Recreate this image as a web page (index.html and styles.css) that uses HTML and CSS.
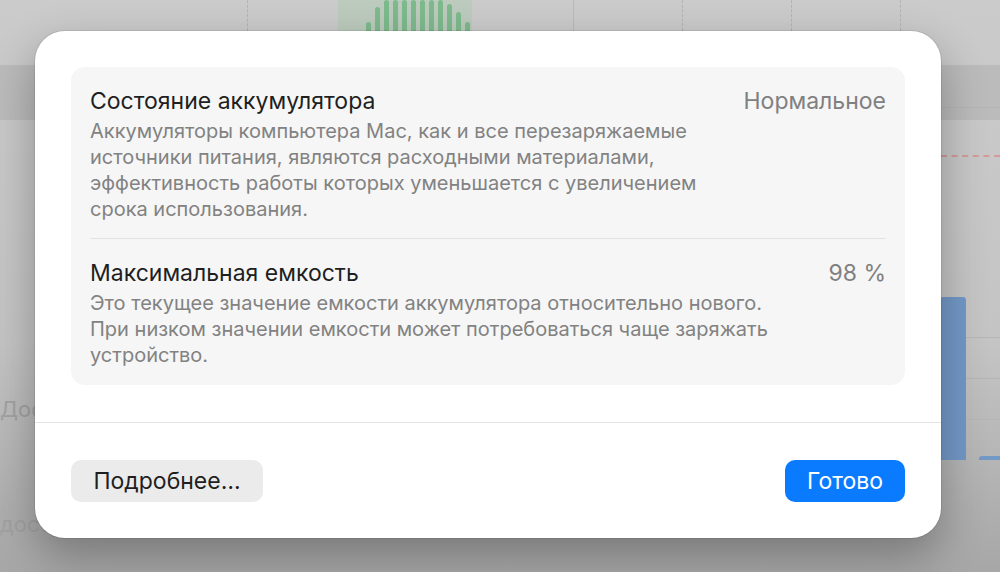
FILE: index.html
```html
<!DOCTYPE html>
<html lang="ru">
<head>
  <meta charset="UTF-8" />
  <meta name="viewport" content="width=device-width, initial-scale=1.0"/>
  <title>Состояние аккумулятора</title>
  <link rel="stylesheet" href="styles.css">
</head>
<body>
  <!-- окно "Аккумулятор" за листом, притемнённое -->
  <div class="backdrop">
    <div class="band"></div>
    <div class="grid-line dashed" style="left:247px"></div>
    <div class="grid-line" style="left:573px"></div>
    <div class="grid-line dashed" style="left:682px"></div>
    <div class="grid-line dashed" style="left:791px"></div>
    <div class="grid-line dashed" style="left:900px"></div>
    <div class="charge-zone"></div>
    <div class="bars">
      <span style="height:9px"></span>
      <span style="height:24px"></span>
      <span style="height:31px"></span>
      <span style="height:31px"></span>
      <span style="height:31px"></span>
      <span style="height:31px"></span>
      <span style="height:31px"></span>
      <span style="height:31px"></span>
      <span style="height:31px"></span>
      <span style="height:27px"></span>
      <span style="height:19px"></span>
      <span style="height:9px"></span>
    </div>
    <div class="side-line" style="top:107px"></div>
    <div class="red-line"></div>
    <div class="side-line" style="top:337px"></div>
    <div class="side-line" style="top:378px"></div>
    <div class="side-line" style="top:419px"></div>
    <div class="blue-bar"></div>
    <div class="blue-bar small"></div>
    <div class="ghost" style="top:396px">Дос</div>
    <div class="ghost" style="top:511px">досту</div>
  </div>

  <div class="sheet">
    <div class="panel">
      <div class="row">
        <div class="row-text">
          <div class="row-title">Состояние аккумулятора</div>
          <div class="row-desc">Аккумуляторы компьютера Mac, как и все перезаряжаемые источники питания, являются расходными материалами, эффективность работы которых уменьшается с увеличением срока использования.</div>
        </div>
        <div class="row-value">Нормальное</div>
      </div>
      <div class="row">
        <div class="row-text">
          <div class="row-title">Максимальная емкость</div>
          <div class="row-desc">Это текущее значение емкости аккумулятора относительно нового. При низком значении емкости может потребоваться чаще заряжать устройство.</div>
        </div>
        <div class="row-value">98 %</div>
      </div>
    </div>

    <div class="footer">
      <button class="btn">Подробнее…</button>
      <button class="btn primary">Готово</button>
    </div>
  </div>
</body>
</html>
```

FILE: styles.css
```css
html, body {
  height: 100%;
}
body {
  margin: 0;
  padding: 31px 0 0 35px;
  box-sizing: border-box;
  overflow: hidden;
  font-family: Inter, "Noto Sans", sans-serif;
  background: linear-gradient(#cbcbcb, #c4c4c4 60%, #a7a7a7);
  position: relative;
}

/* окно позади */
.backdrop {
  position: absolute;
  inset: 0;
}
.band {
  position: absolute;
  left: 0;
  right: 0;
  top: 65px;
  height: 55px;
  background: #bbbbbb;
}
.grid-line {
  position: absolute;
  top: 0;
  height: 31px;
  border-left: 1px solid #b9b9b9;
}
.grid-line.dashed {
  border-left: 1px dashed #b3b3b3;
}
.charge-zone {
  position: absolute;
  left: 338px;
  top: 0;
  width: 134px;
  height: 31px;
  background: #bccbbd;
}
.bars {
  position: absolute;
  left: 366px;
  top: 0;
  height: 31px;
  display: flex;
  align-items: flex-end;
  gap: 4px;
}
.bars span {
  width: 5px;
  background: #7dba8c;
  border-radius: 3px 3px 0 0;
}
.side-line {
  position: absolute;
  left: 941px;
  right: 0;
  border-top: 1px solid #b5b5b5;
}
.red-line {
  position: absolute;
  left: 941px;
  right: 0;
  top: 155px;
  border-top: 2px dashed #d49a98;
}
.blue-bar {
  position: absolute;
  left: 940px;
  top: 297px;
  width: 26px;
  height: 163px;
  background: #7399c7;
  border-radius: 3px 3px 0 0;
}
.blue-bar.small {
  left: 979px;
  top: 456px;
  width: 30px;
  height: 4px;
}
.ghost {
  position: absolute;
  left: 0;
  font-size: 22px;
  color: #a2a2a2;
}

/* лист */
.sheet {
  position: relative;
  width: 906px;
  height: 507px;
  box-sizing: border-box;
  background: #fff;
  border-radius: 30px;
  box-shadow: 0 0 0 1px rgba(0, 0, 0, 0.08), 0 18px 45px rgba(0, 0, 0, 0.3);
  padding-top: 36px;
  display: flex;
  flex-direction: column;
}
.panel {
  margin: 0 36px;
  background: #f6f6f6;
  border-radius: 14px;
  padding: 21px 19px 17px;
}
.row {
  display: flex;
  justify-content: space-between;
  gap: 40px;
}
.row + .row {
  border-top: 1px solid #e2e2e2;
  margin-top: 16px;
  padding-top: 21px;
}
.row-title {
  font-size: 23px;
  line-height: 26px;
  color: #1f1f1f;
  margin-bottom: 4px;
}
.row-desc {
  font-size: 20px;
  line-height: 26px;
  color: #828282;
}
.row-value {
  font-size: 23px;
  line-height: 26px;
  color: #808080;
  white-space: nowrap;
}

.footer {
  margin-top: 37px;
  border-top: 1px solid #e4e4e4;
  padding: 37px 36px 0;
  display: flex;
  justify-content: space-between;
}
.btn {
  height: 42px;
  border: none;
  border-radius: 10px;
  font-family: inherit;
  font-size: 23px;
  color: #1f1f1f;
  background: #ebebeb;
  padding: 0 20px;
  width: 192px;
}
.btn.primary {
  width: 120px;
  background: #0a7bff;
  color: #fff;
}
```
